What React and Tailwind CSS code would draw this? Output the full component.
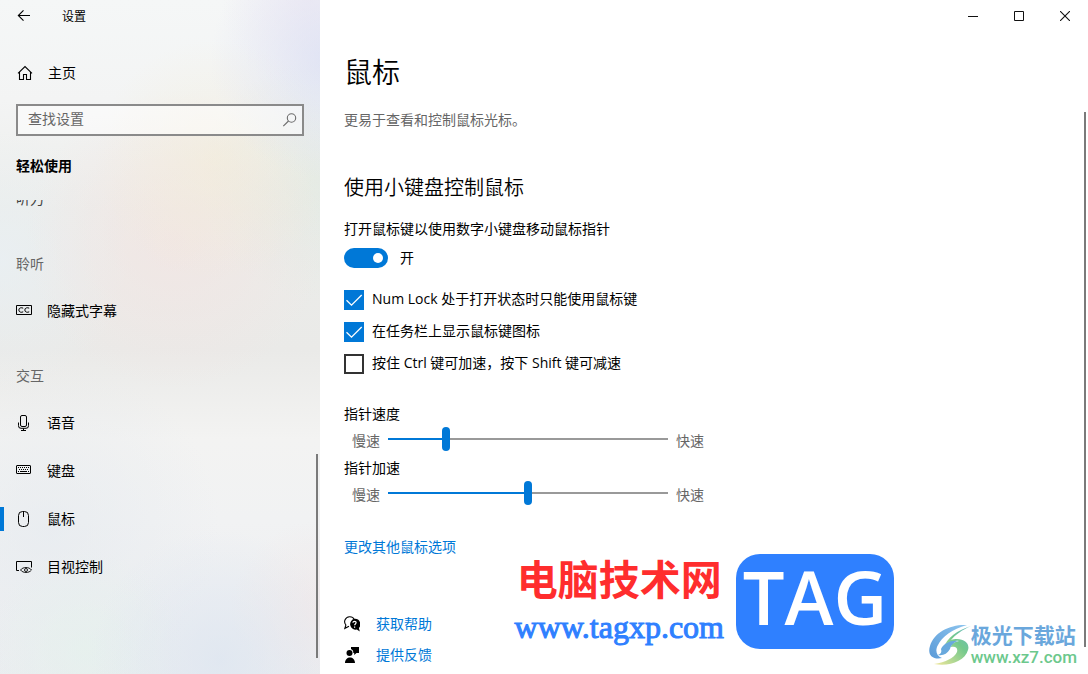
import { useState } from 'react';

const navGroups = [
    {
        title: '聆听',
        items: [{ id: 'captions', label: '隐藏式字幕', Icon: CaptionsIcon }],
    },
    {
        title: '交互',
        items: [
            { id: 'speech', label: '语音', Icon: MicIcon },
            { id: 'keyboard', label: '键盘', Icon: KeyboardIcon },
            { id: 'mouse', label: '鼠标', Icon: MouseIcon },
            { id: 'eye', label: '目视控制', Icon: EyeControlIcon },
        ],
    },
];

function BackIcon() {
    return (
        <svg width="16" height="16" viewBox="0 0 16 16" fill="none" stroke="#000" strokeWidth="1.1" aria-hidden="true">
            <path d="M2.5 7.5H14M7.5 2.3L2.3 7.5l5.2 5.2" />
        </svg>
    );
}

function HomeIcon() {
    return (
        <svg width="16" height="16" viewBox="0 0 16 16" fill="none" stroke="#000" strokeWidth="1.1" aria-hidden="true">
            <path d="M1 8.300L8 1.500l7 6.800M2.500 7v7.500h4V9.500h3v5h4V7" />
        </svg>
    );
}

function SearchIcon() {
    return (
        <svg width="16" height="16" viewBox="0 0 16 16" fill="none" stroke="#6b6b6b" strokeWidth="1.1" aria-hidden="true">
            <circle cx="9.500" cy="6" r="4.2" />
            <path d="M6.500 9L1.300 14.2" />
        </svg>
    );
}

function CaptionsIcon() {
    return (
        <svg width="16" height="16" viewBox="0 0 16 16" fill="none" stroke="#000" aria-hidden="true">
            <path d="M.5 2.5h15v9H.5z" />
            <path d="M7.200 5.200C5.500 4.200 2.800 4.800 2.800 7s2.700 2.800 4.400 1.800M13.200 5.200C11.500 4.200 8.800 4.800 8.800 7s2.700 2.800 4.400 1.800" />
        </svg>
    );
}

function MicIcon() {
    return (
        <svg width="16" height="16" viewBox="0 0 16 16" fill="none" stroke="#000" aria-hidden="true">
            <rect x="4.500" y=".5" width="6" height="11" rx="1.500" />
            <path d="M2.500 7.500v3a2.500 2.500 0 0 0 2.500 2.800h5a2.500 2.500 0 0 0 2.500-2.800v-3M7.500 13.300v2M5 15.500h5" />
        </svg>
    );
}

function KeyboardIcon() {
    return (
        <svg width="16" height="16" viewBox="0 0 16 16" fill="none" stroke="#000" aria-hidden="true">
            <rect x=".5" y="2.500" width="14" height="8" rx=".5" />
            <path d="M2 4.500h11M3 6.500h10" strokeDasharray="1 1" />
            <path d="M2 8.500h1M4 8.500h7M12 8.500h1" />
        </svg>
    );
}

function MouseIcon() {
    return (
        <svg width="16" height="16" viewBox="0 0 16 16" fill="none" stroke="#000" aria-hidden="true">
            <rect x="2.500" y=".5" width="10" height="15" rx="4" />
            <path d="M7.500 .5v5.500" />
        </svg>
    );
}

function EyeControlIcon() {
    return (
        <svg width="16" height="16" viewBox="0 0 16 16" fill="none" stroke="#000" aria-hidden="true">
            <path d="M3 11.500H.5v-9h15v6" />
            <path d="M4.500 11c2.500-3.300 8.500-3.300 11 0-2.500 3.300-8.500 3.300-11 0z" strokeWidth=".9" />
            <circle cx="10" cy="11" r="1.500" strokeWidth=".9" />
        </svg>
    );
}

function HelpIcon() {
    return (
        <svg width="16" height="16" viewBox="0 0 16 16" aria-hidden="true">
            <path d="M5 10.200L.9 12.300l1-3.300A5 5 0 0 1 5.500.7c2.300-.1 4 1 4.700 2.700" fill="none" stroke="#000" strokeWidth="1.100" />
            <path d="M10.500 2.800a5.500 5.500 0 1 0 2.300 10.800l3 2-.9-3.500a5.500 5.500 0 0 0-4.400-9.300z" fill="#000" />
            <path d="M8.900 6.800c.1-2 3.400-1.900 3.200 0-.1 1.100-1.500 1.300-1.500 2.500M10.600 10.500v1.300" fill="none" stroke="#fff" strokeWidth="1.200" />
        </svg>
    );
}

function FeedbackIcon() {
    return (
        <svg width="16" height="16" viewBox="0 0 16 16" aria-hidden="true">
            <circle cx="5.500" cy="6" r="3" fill="#000" />
            <path d="M1 16c0-7.500 10-7.500 10 0zM7 0h8v6h-2.500l-2.300 2V6H9.300C9.500 4 8.700 2.800 7 2z" fill="#000" />
        </svg>
    );
}

function NavItem({ item, active, onSelect }) {
    const { Icon, label } = item;

    return (
        <button
            type="button"
            onClick={onSelect}
            aria-current={active ? 'page' : undefined}
            className="flex h-12 w-full items-center text-left"
        >
            <span className={active ? 'h-6 w-1 bg-[#0078d7]' : 'h-6 w-1'} />
            <span className="ml-3 mr-[15px]">
                <Icon />
            </span>
            {label}
        </button>
    );
}

function CheckRow({ id, label, defaultChecked }) {
    return (
        <div className="flex h-5 items-center gap-2">
            <span className="relative size-5">
                <input
                    id={id}
                    type="checkbox"
                    defaultChecked={defaultChecked}
                    className="peer block size-5 appearance-none border-2 border-[#333] checked:border-[#0078d7] checked:bg-[#0078d7]"
                />
                <svg
                    className="pointer-events-none absolute inset-0 hidden peer-checked:block"
                    width="20"
                    height="20"
                    viewBox="0 0 20 20"
                    fill="none"
                    stroke="#fff"
                    strokeWidth="1.300"
                    aria-hidden="true"
                >
                    <path d="M2.500 10.200l5 5L17.700 5" />
                </svg>
            </span>
            <label htmlFor={id} className="pb-0.5">{label}</label>
        </div>
    );
}

function SpeedSlider({ id, label, initial }) {
    const [value, setValue] = useState(initial);

    return (
        <div>
            <label htmlFor={id} className="block">{label}</label>
            <div className="flex h-[30px] items-center gap-2 pl-2 text-[#666]">
                <span className="pt-1">慢速</span>
                <input
                    id={id}
                    type="range"
                    min="0"
                    max="100"
                    value={value}
                    onChange={(e) => setValue(Number(e.target.value))}
                    style={{ backgroundImage: `linear-gradient(to right, #0078d7 ${value}%, #999 ${value}%)` }}
                    className="h-0.5 w-[280px] appearance-none [&::-webkit-slider-thumb]:h-6 [&::-webkit-slider-thumb]:w-2 [&::-webkit-slider-thumb]:appearance-none [&::-webkit-slider-thumb]:rounded-full [&::-webkit-slider-thumb]:bg-[#0078d7]"
                />
                <span className="pt-1">快速</span>
            </div>
        </div>
    );
}

function WindowButtons() {
    return (
        <div className="flex h-8 justify-end">
            <button type="button" aria-label="最小化" className="flex w-[46px] items-center justify-center">
                <svg width="10" height="10" viewBox="0 0 10 10" stroke="#111"><path d="M0 5.500h10" /></svg>
            </button>
            <button type="button" aria-label="最大化" className="flex w-[46px] items-center justify-center">
                <svg width="10" height="10" viewBox="0 0 10 10" fill="none" stroke="#111"><path d="M.5 .5h9v9h-9z" /></svg>
            </button>
            <button type="button" aria-label="关闭" className="flex w-[46px] items-center justify-center">
                <svg width="10" height="10" viewBox="0 0 10 10" stroke="#111" strokeWidth="1.100"><path d="M0 0l10 10M10 0L0 10" /></svg>
            </button>
        </div>
    );
}

function TagMark() {
    return (
        <div className="pointer-events-none absolute bottom-[25px] right-[194px] flex items-center gap-3">
            <div className="text-center">
                <div className="text-[41px] font-bold leading-[52px] text-[#ff2d2d]">电脑技术网</div>
                <div className="font-['Liberation_Serif',serif] text-[32px] leading-[44px] text-[#2f80ff] [-webkit-text-stroke:1px_#2f80ff]">
                    www.tagxp.com
                </div>
            </div>
            <div className="flex h-[95px] w-[158px] items-center justify-center rounded-3xl bg-[#2f80ff] pb-2 font-['Open_Sans',sans-serif] text-[74px] font-semibold text-white">
                TAG
            </div>
        </div>
    );
}

function AuroraMark() {
    return (
        <div className="pointer-events-none absolute bottom-[7px] right-[11px] flex items-center">
            <svg width="42" height="42" viewBox="0 0 42 42" aria-hidden="true">
                <defs>
                    <linearGradient id="swooshBlue" x1="1" y1="0" x2="0" y2="1">
                        <stop offset="0" stopColor="#8cc4ee" />
                        <stop offset="1" stopColor="#5b9bd8" />
                    </linearGradient>
                    <linearGradient id="swooshGreen" x1="1" y1="0" x2="0" y2="1">
                        <stop offset="0" stopColor="#68b8c8" />
                        <stop offset=".4" stopColor="#74c98c" />
                        <stop offset="1" stopColor="#f3e79a" />
                    </linearGradient>
                </defs>
                <path d="M38 1C22 0 5 8 1 22c-3 9 3 14 12 12-6-2-7-8-4-13C13 13 23 5 38 1z" fill="url(#swooshBlue)" />
                <path d="M42 2C29 6 17 14 15 24c5-6 10-8 15-7-5 1-8 3-8 6 5-1 7 1 6 5-3 6-11 10-23 12 15 3 31-3 34-14 2-6-3-11-11-11-2 0-4 0-6 1 4-5 11-10 20-14z" fill="url(#swooshGreen)" />
                <path d="M12 25c3-6 10-9 17-8-4 1-7 4-8 8-3 5-7 7-12 6 3-1 4-3 3-6z" fill="#68a9dd" />
            </svg>
            <div>
                <div className="text-[21px] font-bold leading-6 text-[#6aa7dc]">极光下载站</div>
                <div className="font-['Roboto',sans-serif] text-[17px] font-medium leading-5 text-[#6cc88c]">
                    www.xz7.com
                </div>
            </div>
        </div>
    );
}

export default function App() {
    const [active, setActive] = useState('mouse');
    const [mouseKeys, setMouseKeys] = useState(true);

    return (
        <div className="relative flex h-screen overflow-hidden bg-white font-['Open_Sans','Noto_Sans_CJK_SC',sans-serif] text-sm leading-5 text-black">
            <aside className="relative flex w-80 shrink-0 flex-col bg-[#f0f0f0] bg-[radial-gradient(circle_at_330px_60px,#d8ddf4b0_0,#d8ddf450_60px,#d8ddf400_120px),radial-gradient(circle_at_310px_0px,#ebe0ef70_0,#ebe0ef00_90px),radial-gradient(circle_at_215px_160px,#f4ecd480_0,#f4ecd440_60px,#f4ecd400_120px),radial-gradient(circle_at_175px_240px,#f5e2e090_0,#f5e2e048_80px,#f5e2e000_150px),radial-gradient(circle_at_320px_180px,#dde8e090_0,#dde8e000_120px),radial-gradient(circle_at_0px_260px,#e8f0f5b0_0,#e8f0f500_130px),radial-gradient(circle_at_220px_660px,#dae4f1a0_0,#dae4f100_130px),radial-gradient(circle_at_85px_650px,#e4f2eca0_0,#e4f2ec00_100px),radial-gradient(circle_at_320px_610px,#f2e6e6a0_0,#f2e6e600_90px),radial-gradient(circle_at_50px_530px,#e5eaefa0_0,#e5eaef00_170px),linear-gradient(#f5f7f7_0,#f3f4f4_100px,#ecedea_210px,#eaeae8_350px,#f3f3f2_440px,#f1f2f3_520px,#ebedf0_100%)]">
                <header className="flex h-8 items-center text-xs">
                    <button type="button" aria-label="返回" className="ml-4 mr-[30px]">
                        <BackIcon />
                    </button>
                    <span className="pt-0.5">设置</span>
                </header>

                <button type="button" className="mt-[17px] flex h-12 items-center gap-[15px] pl-[17px] text-left">
                    <HomeIcon />
                    主页
                </button>

                <div className="mx-4 mt-[7px] flex h-8 items-center border-2 border-[#8a8a8a] bg-white/50 pl-2.5 pr-1">
                    <input
                        type="text"
                        aria-label="查找设置"
                        placeholder="查找设置"
                        className="min-w-0 flex-1 bg-transparent pb-0.5 outline-none placeholder:text-[#666]"
                    />
                    <SearchIcon />
                </div>

                <h2 className="ml-4 mt-5 font-bold">轻松使用</h2>

                <nav className="mt-6 min-h-0 flex-1 overflow-hidden">
                    <div className="-mt-[25px] flex h-12 items-center pl-4 text-[#444]">听力</div>
                    {navGroups.map((group) => (
                        <section key={group.title}>
                            <h3 className="flex h-16 items-center pl-4 pt-[18px] text-[#666]">{group.title}</h3>
                            {group.items.map((item) => (
                                <NavItem
                                    key={item.id}
                                    item={item}
                                    active={item.id === active}
                                    onSelect={() => setActive(item.id)}
                                />
                            ))}
                        </section>
                    ))}
                </nav>

                {/* Scroll position of the nav list */}
                <div className="absolute bottom-4 right-0.5 h-[204px] w-0.5 bg-[#7a7a7a]" />
            </aside>

            <div className="flex min-w-0 flex-1 flex-col">
                <WindowButtons />

                <main className="pl-6 pt-[22px]">
                    <h1 className="text-[28px] font-[350] leading-9">鼠标</h1>
                    <p className="mt-5 text-[#666]">更易于查看和控制鼠标光标。</p>

                    <h2 className="mt-11 text-xl font-[350] leading-7">使用小键盘控制鼠标</h2>
                    <p id="mouse-keys" className="mt-[17px]">打开鼠标键以使用数字小键盘移动鼠标指针</p>
                    <div className="mt-[9px] flex h-5 items-center gap-3">
                        <button
                            type="button"
                            role="switch"
                            aria-checked={mouseKeys}
                            aria-labelledby="mouse-keys"
                            onClick={() => setMouseKeys(!mouseKeys)}
                            className={
                                mouseKeys
                                    ? 'flex h-5 w-11 items-center justify-end rounded-full bg-[#0078d7] px-[5px]'
                                    : 'flex h-5 w-11 items-center justify-start rounded-full bg-[#999] px-[5px]'
                            }
                        >
                            <span className="size-2.5 rounded-full bg-white" />
                        </button>
                        <span>{mouseKeys ? '开' : '关'}</span>
                    </div>

                    <div className="mt-[22px] flex flex-col gap-3">
                        <CheckRow id="num-lock" label="Num Lock 处于打开状态时只能使用鼠标键" defaultChecked />
                        <CheckRow id="taskbar" label="在任务栏上显示鼠标键图标" defaultChecked />
                        <CheckRow id="ctrl-shift" label="按住 Ctrl 键可加速，按下 Shift 键可减速" />
                    </div>

                    <div className="mt-[30px] flex flex-col gap-1">
                        <SpeedSlider id="speed" label="指针速度" initial={20} />
                        <SpeedSlider id="accel" label="指针加速" initial={50} />
                    </div>

                    <a href="#options" className="mt-[29px] block w-fit text-[#0078d7]">更改其他鼠标选项</a>

                    <div className="mt-[57px] flex flex-col gap-[11px] text-[#0078d7]">
                        <a href="#help" className="flex w-fit items-center gap-4">
                            <HelpIcon />
                            获取帮助
                        </a>
                        <a href="#feedback" className="flex w-fit items-center gap-4">
                            <FeedbackIcon />
                            提供反馈
                        </a>
                    </div>
                </main>
            </div>

            <div className="absolute bottom-[27px] right-0.5 top-28 w-0.5 bg-[#7a7a7a]" />
            <TagMark />
            <AuroraMark />
        </div>
    );
}
